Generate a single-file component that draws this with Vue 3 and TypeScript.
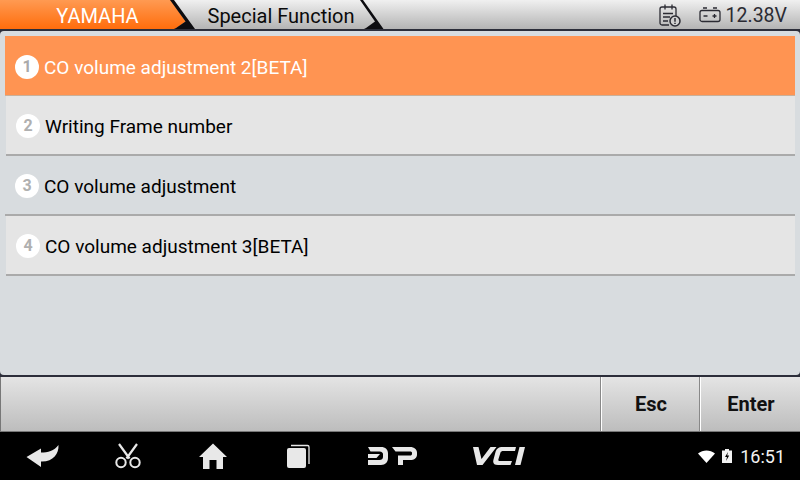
<script setup lang="ts">
const items: string[] = [
  'CO volume adjustment 2[BETA]',
  'Writing Frame number',
  'CO volume adjustment',
  'CO volume adjustment 3[BETA]',
];
</script>

<template>
  <div class="screen">
    <header class="top">
      <div class="crumb first">
        <span>YAMAHA</span>
        <svg class="tip" width="26" height="29" viewBox="0 0 26 29">
          <path d="M0 0H1L15.500 21.500L5 29H0Z" fill="url(#og)" />
          <path d="M0 0H4L25 29H4L6 28L15.500 21.500Z" fill="#0c0c10" />
          <defs>
            <linearGradient id="og" x1="0" y1="0" x2="0" y2="1">
              <stop offset="0" stop-color="#ff9a52" />
              <stop offset="1" stop-color="#ff6d0c" />
            </linearGradient>
          </defs>
        </svg>
      </div>
      <div class="crumb second">
        <span>Special Function</span>
        <svg class="tip" width="26" height="29" viewBox="0 0 26 29">
          <path d="M0 0H3L23.500 29H4L6 28L15 21.500Z" fill="#0c0c10" />
        </svg>
      </div>
      <div class="status">
        <svg class="note" width="22" height="24" viewBox="0 0 22 24" fill="none" stroke="#2b2b33" stroke-width="1.300">
          <path d="M10 22H3A2 2 0 0 1 1 20V6A2 2 0 0 1 3 4H15A2 2 0 0 1 17 6V13" />
          <path d="M6 1.500V6.500M13 1.500V6.500M4 10.500H14M4 14H11M4 18H9" />
          <circle cx="16" cy="18" r="5" fill="#d0d0d0" stroke-width="1.500" />
          <path d="M16 15V18.800M16 19.800V21" stroke-width="1.500" />
        </svg>
        <svg class="batt" width="22" height="16" viewBox="0 0 22 16" fill="none" stroke="#2b2b33" stroke-width="1.300">
          <rect x="1" y="3.500" width="20" height="11" rx="2" />
          <path d="M4 1H8M14 1H18M4.500 9H8.500M13.500 9H17.500M15.500 7V11" />
        </svg>
        <span>12.38V</span>
      </div>
    </header>

    <main class="panel">
      <ul class="list">
        <li v-for="(item, i) in items" :key="item" class="row" :class="{ active: i === 0, odd: i % 2 === 1 }">
          <span class="num">{{ i + 1 }}</span>
          <span>{{ item }}</span>
        </li>
      </ul>
    </main>

    <footer class="actions">
      <button class="btn esc">Esc</button>
      <button class="btn enter">Enter</button>
    </footer>

    <nav class="nav">
      <svg class="n-back" width="34" height="24" viewBox="0 0 34 24">
        <path d="M0.500 13L15 4.500V8.500C22 8.500 28 7 32.500 1C33 10 27 18 15 17.500V23Z" fill="#e8e8e8" />
      </svg>
      <svg class="n-cut" width="26" height="26" viewBox="0 0 26 26" fill="none" stroke="#e8e8e8">
        <path d="M4 1L14.500 15.500M22 1L11.500 15.500" stroke-width="2.200" />
        <circle cx="6" cy="19.500" r="4.700" stroke-width="2" />
        <circle cx="20" cy="19.500" r="4.700" stroke-width="2" />
      </svg>
      <svg class="n-home" width="30" height="26" viewBox="0 0 30 26">
        <path d="M15 0.500L29 14H25V26H18.500V17H11.500V26H5V14H1Z" fill="#e8e8e8" />
      </svg>
      <svg class="n-recent" width="26" height="26" viewBox="0 0 26 26">
        <rect x="1" y="5" width="19" height="20" rx="2" fill="#e8e8e8" />
        <path d="M5 2.500H21.500A1.500 1.500 0 0 1 23 4V21" fill="none" stroke="#e8e8e8" stroke-width="1.300" />
      </svg>
      <svg class="n-dp" width="50" height="20" viewBox="0 0 50 20">
        <path d="M0 1H13C17.500 1 20 3.500 20 7.500V12C20 16 17.500 19 13 19H0V14H11.500C13.500 14 15 13 15 11V8C15 7 14 5.500 11.500 5.500H2.500ZM0 8H12L8.500 12H0Z" fill="#e8e8e8" />
        <path d="M24 1H42C46.500 1 49 3.500 49 6.500V8.500C49 12 46.500 14 42 14H35V19H30V9.500H42C43.500 9.500 44 9 44 7.500V7C44 6 43.500 5.500 42 5.500H27.500Z" fill="#e8e8e8" />
      </svg>
      <svg class="n-vci" width="54" height="20" viewBox="0 0 54 20">
        <path d="M1 1H6.500L9.500 13L18.500 1H24.500L10.500 19H5Z" fill="#e8e8e8" />
        <path d="M44 1H31C26 1 24.500 3 23.500 6L21.500 13.500C20.500 17 22 19 26 19H38.500L40 15H28C26.500 15 26 14.500 26.500 13L28.500 6.500C29 5.500 30 5 31 5H43Z" fill="#e8e8e8" />
        <path d="M47.500 1H53L48.500 19H43Z" fill="#e8e8e8" />
      </svg>
      <div class="tray">
        <svg width="17" height="13" viewBox="0 0 17 13"><path d="M0 3.500C5 -0.500 12 -0.500 17 3.500L8.500 13Z" fill="#fff" /></svg>
        <svg class="charge" width="10" height="14" viewBox="0 0 10 14">
          <path d="M3 0H7V1.500H10V14H0V1.500H3Z" fill="#f2f2f2" />
          <path d="M6 3L3 8H5L4 12L7.200 6.500H5.200Z" fill="#000" />
        </svg>
        <span>16:51</span>
      </div>
    </nav>
  </div>
</template>

<style scoped>
.screen {
  width: 800px;
  height: 480px;
  display: flex;
  flex-direction: column;
  overflow: hidden;
  background: #2c2e3a;
  font-family: Roboto, "Liberation Sans", sans-serif;
  color: #000;
}
.top {
  height: 29px;
  flex: none;
  display: flex;
  background: linear-gradient(#f0f0f0, #b4b4b4);
  margin-bottom: 2px;
  font-size: 20px;
}
.crumb {
  position: relative;
  height: 29px;
  display: flex;
  align-items: center;
  justify-content: center;
  box-sizing: border-box;
  padding-top: 2px;
}
.first {
  width: 170px;
  padding-left: 25px;
  color: #fff;
  background: linear-gradient(#ff9a52, #ff6d0c);
}
.second {
  width: 190px;
  padding-left: 32px;
  color: #0a0a0a;
}
.tip {
  position: absolute;
  top: 0;
}
.first .tip {
  left: 170px;
}
.second .tip {
  left: 190px;
}
.status {
  margin-left: auto;
  display: flex;
  align-items: center;
  padding-right: 13px;
  padding-top: 1px;
  font-size: 19.500px;
  color: #2b2b33;
}
.note {
  margin-right: 18px;
}
.batt {
  margin-right: 5px;
}
.panel {
  flex: 1;
  background: #d8dcdf;
  padding: 5px 5px 0;
  margin-bottom: 2px;
  border-radius: 4px;
}
.list {
  list-style: none;
  margin: 0;
  padding: 0;
}
.row {
  height: 56px;
  border-bottom: 2px solid #aaa;
  display: flex;
  align-items: center;
  gap: 5px;
  padding-left: 10px;
  padding-top: 2px;
  font-size: 19px;
}
.row.odd {
  background: #e5e5e5;
  margin-left: 1px;
}
.row.active {
  background: #ff9452;
  color: #fff;
  border-bottom: 1px solid #c9b09a;
  padding-top: 3px;
}
.num {
  width: 24px;
  height: 24px;
  border-radius: 50%;
  background: #fff;
  color: #b0b0b0;
  font-size: 16px;
  font-weight: 700;
  text-align: center;
  line-height: 24px;
  flex: none;
}
.active .num {
  color: #aaa;
}
.actions {
  height: 55px;
  flex: none;
  display: flex;
  justify-content: flex-end;
  background: linear-gradient(#e4e4e4, #bdbdbd);
  border-bottom: 1px solid #777;
  box-shadow: inset 1px 0 0 #777;
  box-sizing: border-box;
}
.btn {
  border: none;
  border-left: 1px solid #888;
  box-shadow: inset 1px 0 0 #fff;
  background: none;
  font: 700 20px Roboto, "Liberation Sans", sans-serif;
  color: #111;
  padding: 0 0 0 2px;
}
.esc {
  width: 99px;
}
.enter {
  width: 101px;
}
.nav {
  height: 48px;
  flex: none;
  background: #000;
  display: flex;
  align-items: center;
}
.nav > svg {
  flex: none;
}
.n-back {
  margin-left: 26px;
}
.n-cut {
  margin-left: 55px;
}
.n-home {
  margin-left: 57px;
}
.n-recent {
  margin-left: 58px;
}
.n-dp {
  margin-left: 56px;
}
.n-vci {
  margin-left: 54px;
}
.tray {
  margin-left: auto;
  padding-right: 15px;
  display: flex;
  align-items: center;
  gap: 7px;
  color: #f2f2f2;
  font-size: 18px;
}
.charge {
  margin-right: 1px;
}
</style>
